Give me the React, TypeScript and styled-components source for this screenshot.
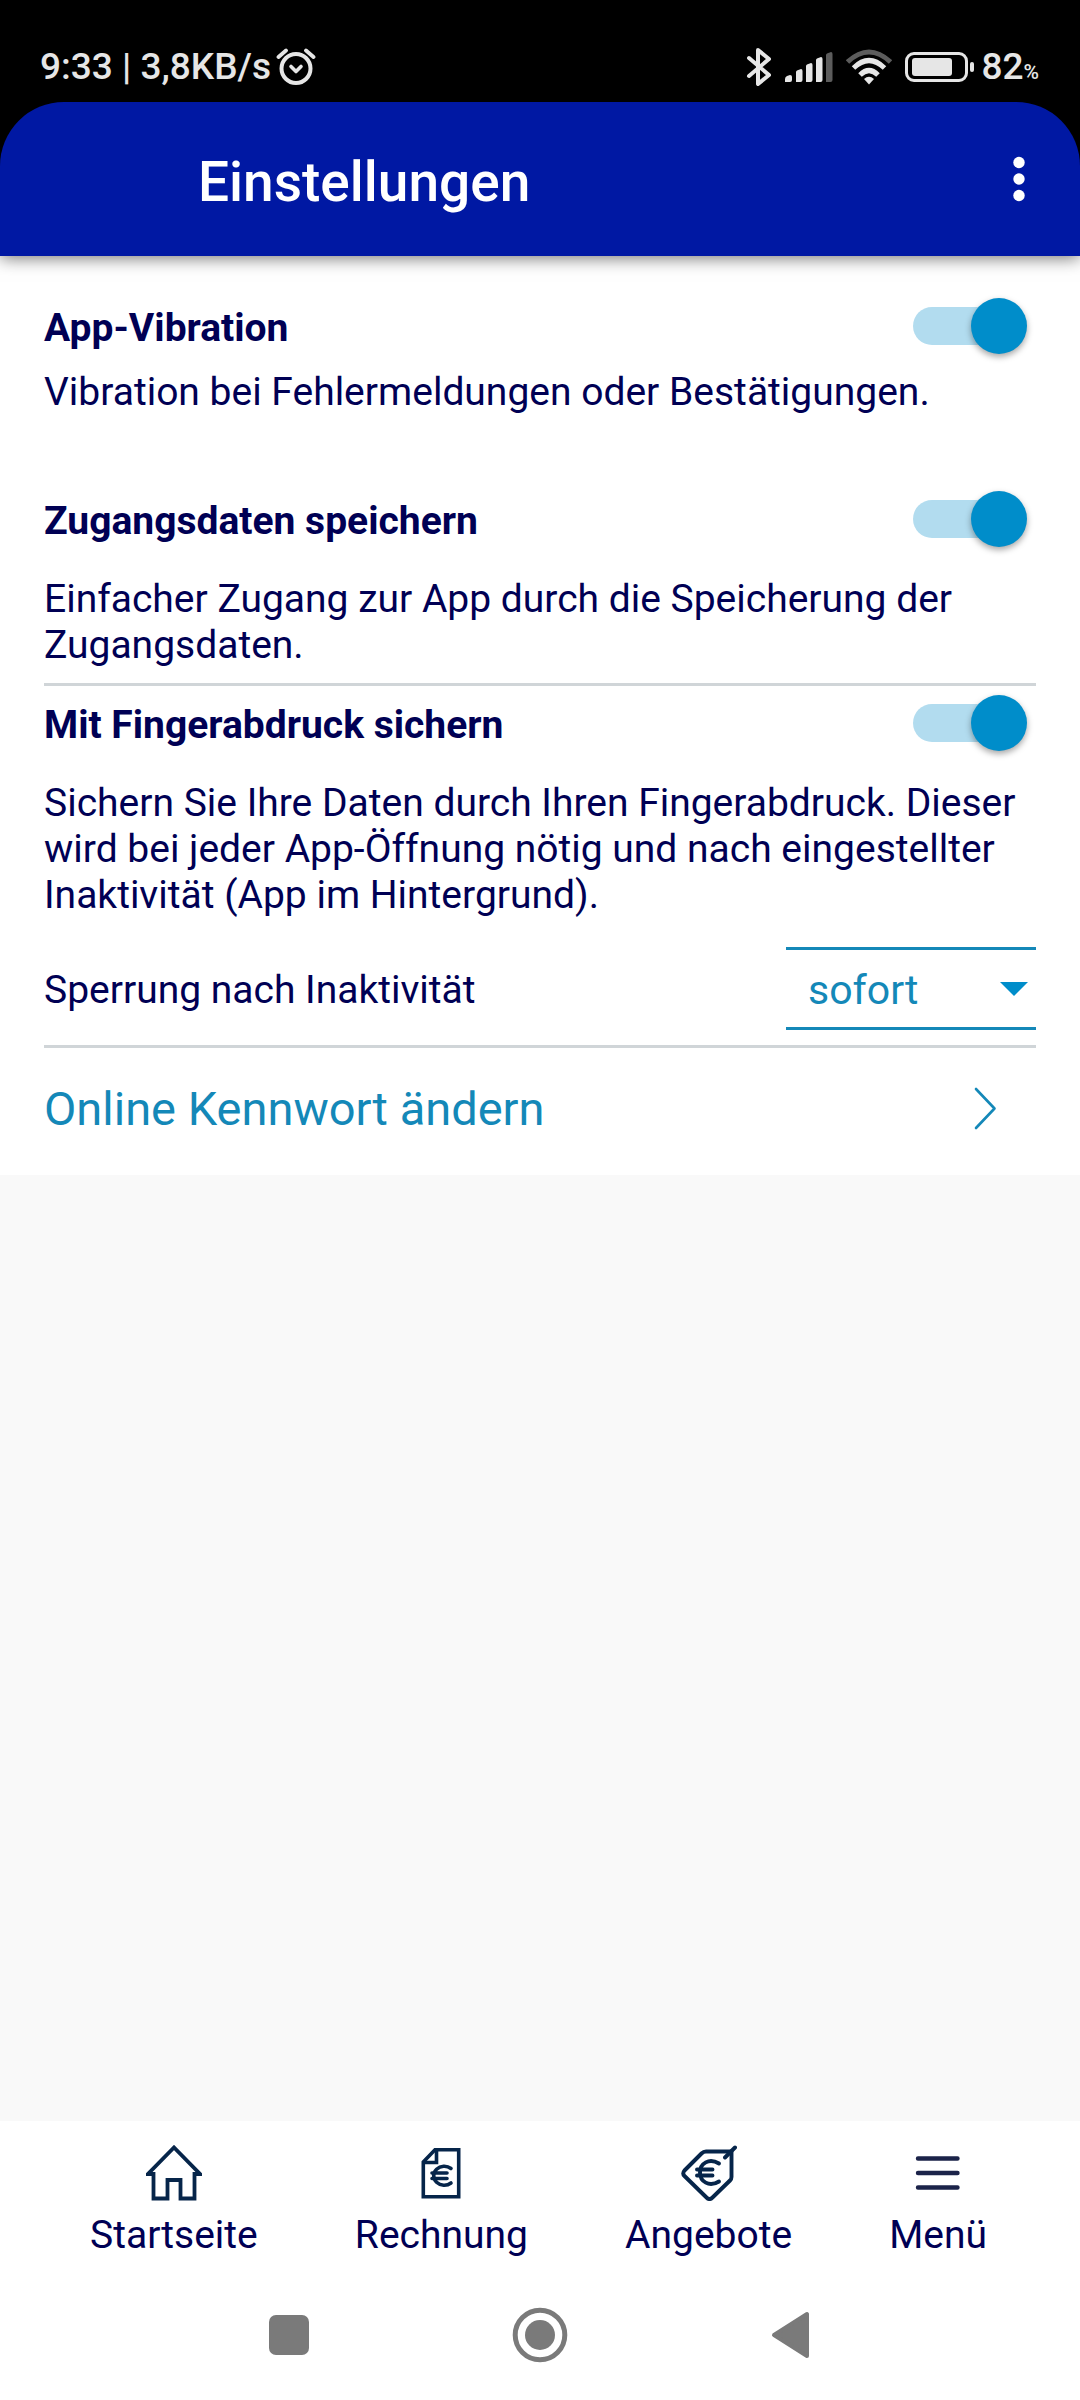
import React, { useState } from "react";
import styled, { createGlobalStyle } from "styled-components";

const color = {
  header: "#0018a3",
  ink: "#000054",
  icon: "#06254a",
  accent: "#008dca",
  link: "#1488b8",
  track: "#b2dcef",
  divider: "#d0d5d8",
  status: "#e6e6e6",
  dim: "#5c5c5c",
  system: "#7a7a7a",
};

const GlobalStyle = createGlobalStyle`
  *, *::before, *::after { box-sizing: border-box; }
  body {
    margin: 0;
    font-family: Roboto, "Liberation Sans", sans-serif;
    font-size: 39px;
    line-height: 46px;
    color: ${color.ink};
    background: #fff;
  }
  button, select { font: inherit; }
`;

const Screen = styled.div`
  display: flex;
  flex-direction: column;
  min-height: 100vh;
  background: #f9f9f9;
`;

const TopArea = styled.div`
  background: #000;
  box-shadow: 0 2px 16px rgba(0, 0, 0, 0.55);
  z-index: 1;
`;

const StatusBar = styled.div`
  display: flex;
  justify-content: space-between;
  align-items: center;
  height: 102px;
  padding: 32px 41px 0 40px;
  color: ${color.status};
  font-size: 37px;
  font-weight: 500;
`;

const StatusGroup = styled.div<{ $gap: number }>`
  display: flex;
  align-items: center;
  gap: ${(p) => p.$gap}px;
`;

const Level = styled.span`
  display: flex;
  align-items: baseline;
`;

const Percent = styled.span`
  font-size: 21px;
  line-height: 24px;
`;

const AppBar = styled.header`
  display: flex;
  justify-content: space-between;
  align-items: center;
  height: 154px;
  padding: 0 40px 0 198px;
  border-radius: 64px 64px 0 0;
  background: ${color.header};
  color: #fff;
`;

const Title = styled.h1`
  margin: 0;
  padding-top: 6px;
  font-size: 55px;
  line-height: 64px;
  font-weight: 500;
`;

const IconButton = styled.button`
  display: flex;
  align-items: center;
  justify-content: center;
  padding: 0;
  border: 0;
  background: none;
  color: inherit;
`;

const Settings = styled.main`
  display: flex;
  flex-direction: column;
  padding: 42px 44px 0;
  background: #fff;
`;

const Setting = styled.section<{ $gap: number; $before?: number; $after: number }>`
  display: flex;
  flex-direction: column;
  gap: ${(p) => p.$gap}px;
  padding-top: ${(p) => p.$before ?? 0}px;
  padding-bottom: ${(p) => p.$after}px;
`;

const Row = styled.div`
  display: flex;
  justify-content: space-between;
  align-items: center;
`;

const SettingLabel = styled.label<{ $strong?: boolean }>`
  padding-top: 3px;
  font-weight: ${(p) => (p.$strong ? 700 : 400)};
`;

const Description = styled.p`
  margin: 0;
`;

const Toggle = styled.input`
  appearance: none;
  display: grid;
  align-items: center;
  width: 114px;
  height: 56px;
  margin: 0 9px 0 0;

  &::before,
  &::after {
    content: "";
    grid-area: 1 / 1;
  }
  &::before {
    width: 104px;
    height: 38px;
    border-radius: 19px;
    background: #c8c8c8;
  }
  &::after {
    width: 56px;
    height: 56px;
    border-radius: 50%;
    background: #f1f1f1;
    box-shadow: 0 3px 6px rgba(0, 0, 0, 0.35);
  }
  &:checked::before {
    background: ${color.track};
  }
  &:checked::after {
    justify-self: end;
    background: ${color.accent};
  }
`;

const Divider = styled.hr`
  width: 100%;
  height: 3px;
  margin: 0;
  border: 0;
  background: ${color.divider};
`;

const SelectBox = styled.span`
  display: grid;
  align-items: center;
  width: 250px;

  & > * {
    grid-area: 1 / 1;
  }
  & > svg {
    justify-self: end;
    margin-right: 8px;
    pointer-events: none;
  }
`;

const Select = styled.select`
  appearance: none;
  width: 100%;
  height: 83px;
  padding: 3px 50px 0 22px;
  border: solid ${color.link};
  border-width: 3px 0;
  border-radius: 0;
  background: none;
  color: ${color.link};
  font-size: 41px;
`;

const LinkRow = styled.a`
  display: flex;
  justify-content: space-between;
  align-items: center;
  height: 127px;
  padding: 0 39px 5px 0;
  color: ${color.link};
  font-size: 47px;
  text-decoration: none;
`;

const BottomArea = styled.footer`
  margin-top: auto;
  background: #fff;
`;

const Tabs = styled.nav`
  display: flex;
  justify-content: space-between;
  padding: 24px 93px 12px 90px;
`;

const Tab = styled.a`
  display: flex;
  flex-direction: column;
  align-items: center;
  gap: 11px;
  color: inherit;
  text-decoration: none;
`;

const SystemBar = styled.div`
  display: flex;
  justify-content: center;
  align-items: center;
  gap: 195px;
  height: 130px;
  color: ${color.system};
`;

const AlarmIcon = () => (
  <svg width="40" height="40" viewBox="0 0 40 40" fill="none" stroke="currentColor" strokeLinecap="round" strokeLinejoin="round">
    <circle cx="20" cy="21.500" r="14.500" strokeWidth="4" />
    <path d="M15 19.500l5 5 5-5" strokeWidth="3.600" />
    <path d="M2.500 10l7.500-6.500M37.500 10l-7.500-6.500" strokeWidth="3.800" />
  </svg>
);

const BluetoothIcon = () => (
  <svg width="26" height="40" viewBox="0 0 26 40" fill="none" stroke="currentColor" strokeWidth="4" strokeLinecap="round" strokeLinejoin="round">
    <path d="M3 11l20 17-11 9V3l11 9L3 29" />
  </svg>
);

const SignalIcon = () => (
  <svg width="48" height="32" viewBox="0 0 48 32" fill="currentColor">
    <path d="M0 31v-3q0-2 2-3l3-1q2 0 2 2v3q0 2-2 2z" />
    <path d="M11 31V21q0-1 1-1.500l4-1.500q1.500 0 1.500 2v9q0 2-2 2z" />
    <path d="M21 31V15q0-1 1-1.500l4-1.500q1.500 0 1.500 2v15q0 2-2 2z" />
    <path d="M31 31V9q0-1 1-1.500l4-1.500q1.500 0 1.500 2v21q0 2-2 2z" />
    <path d="M41 31V4q0-1 1-1.500l4-1.500q1.500 0 1.500 2v26q0 2-2 2z" fill={color.dim} />
  </svg>
);

const WifiIcon = () => (
  <svg width="46" height="36" viewBox="0 0 46 36" fill="none" stroke="currentColor" strokeWidth="5">
    <path d="M1.500 13Q23-7 44.500 13" stroke={color.dim} />
    <path d="M7.500 19Q23 4 38.500 19" />
    <path d="M14 26Q23 17 32 26" />
    <path d="M18 30q5-4.500 10 0l-5 5.500z" fill="currentColor" stroke="none" />
  </svg>
);

const BatteryIcon = () => (
  <svg width="70" height="32" viewBox="0 0 70 32" fill="none" stroke="currentColor" strokeWidth="3">
    <rect x="1.500" y="2.500" width="60" height="27" rx="7.500" />
    <rect x="7" y="7" width="40" height="18" rx="3" fill="currentColor" stroke="none" />
    <rect x="65" y="11" width="4" height="10" rx="2" fill="currentColor" stroke="none" />
  </svg>
);

const MoreIcon = () => (
  <svg width="42" height="48" viewBox="0 0 42 48" fill="currentColor">
    <circle cx="21" cy="7.500" r="5.700" />
    <circle cx="21" cy="24" r="5.700" />
    <circle cx="21" cy="40.500" r="5.700" />
  </svg>
);

const CaretIcon = () => (
  <svg width="28" height="14" viewBox="0 0 28 14" fill={color.accent}>
    <path d="M0 0h28L14 14z" />
  </svg>
);

const ChevronIcon = () => (
  <svg width="24" height="44" viewBox="0 0 24 44" fill="none" stroke="currentColor" strokeWidth="2.600" strokeLinecap="round" strokeLinejoin="round">
    <path d="M3 2l18.500 19.500L3 41" />
  </svg>
);

const HomeIcon = () => (
  <svg width="56" height="56" viewBox="0 0 56 56" fill="none" stroke={color.icon} strokeWidth="3.800" strokeLinecap="round">
    <path d="M7.500 29H2L28 2.500 54 29h-5.500V53.500H34.500V35h-13v18.500H7.500z" />
  </svg>
);

const InvoiceIcon = () => (
  <svg width="56" height="56" viewBox="0 0 56 56" fill="none" stroke={color.icon} strokeWidth="3.600">
    <path d="M22 4.800h23.700v47H10.300V17z" />
    <path d="M23.500 4.800V17.500H10.300" />
    <path d="M38 23.500a10.500 9.500 0 1 0 0 14.500M19 28h15M19 33.500h15" strokeLinecap="round" />
  </svg>
);

const OfferIcon = () => (
  <svg width="56" height="56" viewBox="0 0 56 56" fill="none" stroke={color.icon} strokeWidth="3.900" strokeLinecap="round" strokeLinejoin="round">
    <path d="M25 6.500h25.500V32q0 2-1.500 3.500L31.500 52.500q-3 3-6 0L3.500 31q-2.500-2.500 0-5.500L20.500 8.500q2-2 4.500-2z" />
    <path d="M54 2.500L44 12.500" />
    <path d="M38 18.500c-10-6-19 0-19 9s9 15 19 9M16 24.500h15.500M16 30.500h15.500" />
  </svg>
);

const MenuIcon = () => (
  <svg width="56" height="56" viewBox="0 0 56 56" fill="none" stroke="#1b2349" strokeWidth="4.400" strokeLinecap="round">
    <path d="M8 13.500h39.500M8 28h39.500M8 42.500h39.500" />
  </svg>
);

const RecentsIcon = () => (
  <svg width="56" height="56" viewBox="0 0 56 56" fill="currentColor">
    <rect x="8" y="8" width="40" height="40" rx="7" />
  </svg>
);

const HomeKeyIcon = () => (
  <svg width="56" height="56" viewBox="0 0 56 56" fill="currentColor">
    <circle cx="28" cy="28" r="24.800" fill="none" stroke="currentColor" strokeWidth="5" />
    <circle cx="28" cy="28" r="15" />
  </svg>
);

const BackIcon = () => (
  <svg width="56" height="56" viewBox="0 0 56 56" fill="currentColor" stroke="currentColor" strokeWidth="4" strokeLinejoin="round">
    <path d="M44 7v42L11 28z" />
  </svg>
);

const tabs = [
  { label: "Startseite", Icon: HomeIcon },
  { label: "Rechnung", Icon: InvoiceIcon },
  { label: "Angebote", Icon: OfferIcon },
  { label: "Menü", Icon: MenuIcon },
];

type SwitchSettingProps = {
  id: string;
  label: string;
  text: string;
  gap: number;
  before?: number;
  after: number;
};

function SwitchSetting({ id, label, text, gap, before, after }: SwitchSettingProps) {
  const [on, setOn] = useState(true);
  return (
    <Setting $gap={gap} $before={before} $after={after}>
      <Row>
        <SettingLabel htmlFor={id} $strong>
          {label}
        </SettingLabel>
        <Toggle id={id} type="checkbox" checked={on} onChange={() => setOn(!on)} />
      </Row>
      <Description>{text}</Description>
    </Setting>
  );
}

export default function App() {
  return (
    <Screen>
      <GlobalStyle />
      <TopArea>
        <StatusBar>
          <StatusGroup $gap={5}>
            <span>9:33 | 3,8KB/s</span>
            <AlarmIcon />
          </StatusGroup>
          <StatusGroup $gap={13}>
            <BluetoothIcon />
            <SignalIcon />
            <WifiIcon />
            <StatusGroup $gap={6}>
              <BatteryIcon />
              <Level>
                82<Percent>%</Percent>
              </Level>
            </StatusGroup>
          </StatusGroup>
        </StatusBar>
        <AppBar>
          <Title>Einstellungen</Title>
          <IconButton type="button" aria-label="Weitere Optionen">
            <MoreIcon />
          </IconButton>
        </AppBar>
      </TopArea>

      <Settings>
        <SwitchSetting
          id="vibration"
          label="App-Vibration"
          text="Vibration bei Fehlermeldungen oder Bestätigungen."
          gap={15}
          after={76}
        />
        <SwitchSetting
          id="credentials"
          label="Zugangsdaten speichern"
          text="Einfacher Zugang zur App durch die Speicherung der Zugangsdaten."
          gap={29}
          after={15}
        />
        <Divider />
        <SwitchSetting
          id="fingerprint"
          label="Mit Fingerabdruck sichern"
          text="Sichern Sie Ihre Daten durch Ihren Fingerabdruck. Dieser wird bei jeder App-Öffnung nötig und nach eingestellter Inaktivität (App im Hintergrund)."
          gap={29}
          before={9}
          after={29}
        />
        <Setting $gap={0} $after={15}>
          <Row>
            <SettingLabel htmlFor="lock">Sperrung nach Inaktivität</SettingLabel>
            <SelectBox>
              <Select id="lock" defaultValue="sofort">
                <option value="sofort">sofort</option>
              </Select>
              <CaretIcon />
            </SelectBox>
          </Row>
        </Setting>
        <Divider />
        <LinkRow href="#kennwort">
          Online Kennwort ändern
          <ChevronIcon />
        </LinkRow>
      </Settings>

      <BottomArea>
        <Tabs>
          {tabs.map(({ label, Icon }) => (
            <Tab key={label} href={`#${label}`}>
              <Icon />
              {label}
            </Tab>
          ))}
        </Tabs>
        <SystemBar>
          <IconButton type="button" aria-label="Letzte Apps">
            <RecentsIcon />
          </IconButton>
          <IconButton type="button" aria-label="Startbildschirm">
            <HomeKeyIcon />
          </IconButton>
          <IconButton type="button" aria-label="Zurück">
            <BackIcon />
          </IconButton>
        </SystemBar>
      </BottomArea>
    </Screen>
  );
}
